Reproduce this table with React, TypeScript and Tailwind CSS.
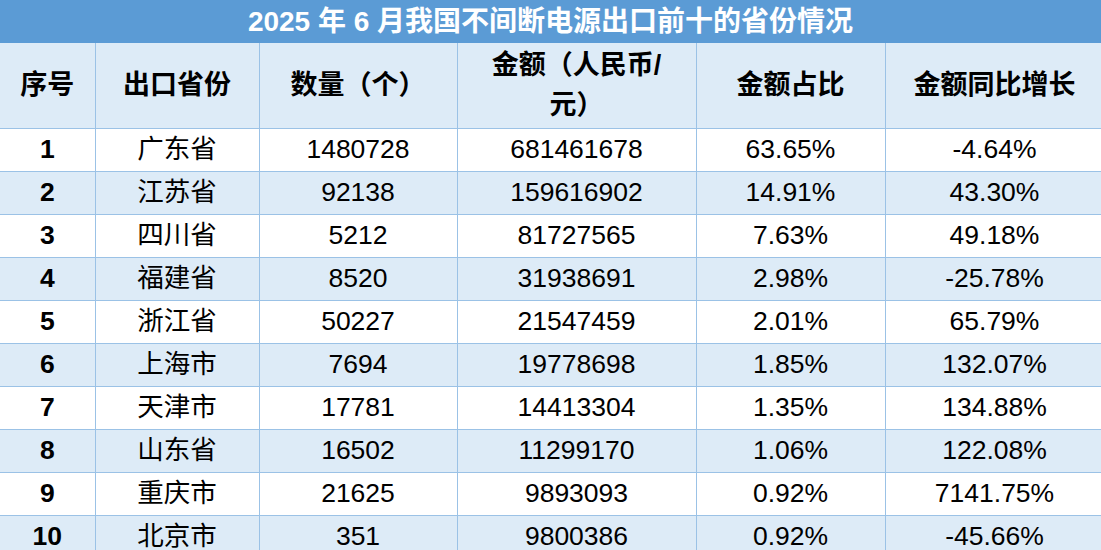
const rows = [
  ['1', '广东省', '1480728', '681461678', '63.65%', '-4.64%'],
  ['2', '江苏省', '92138', '159616902', '14.91%', '43.30%'],
  ['3', '四川省', '5212', '81727565', '7.63%', '49.18%'],
  ['4', '福建省', '8520', '31938691', '2.98%', '-25.78%'],
  ['5', '浙江省', '50227', '21547459', '2.01%', '65.79%'],
  ['6', '上海市', '7694', '19778698', '1.85%', '132.07%'],
  ['7', '天津市', '17781', '14413304', '1.35%', '134.88%'],
  ['8', '山东省', '16502', '11299170', '1.06%', '122.08%'],
  ['9', '重庆市', '21625', '9893093', '0.92%', '7141.75%'],
  ['10', '北京市', '351', '9800386', '0.92%', '-45.66%'],
]

const font = "font-['Liberation_Sans','Noto_Sans_CJK_SC',sans-serif]"

export default function App() {
  return (
    <div className={`w-[1101px] h-[550px] overflow-hidden bg-white ${font}`}>
      <div className="h-[43px] bg-[#5b9bd5] text-white text-[28px] font-bold flex items-center justify-center">
        2025 年 6 月我国不间断电源出口前十的省份情况
      </div>
      <table className="border-collapse table-fixed w-[1104px] text-[26.5px] text-black">
        <colgroup>
          <col className="w-[95px]" />
          <col className="w-[164px]" />
          <col className="w-[198px]" />
          <col className="w-[239px]" />
          <col className="w-[189px]" />
          <col className="w-[219px]" />
        </colgroup>
        <thead>
          <tr className="h-[85px] bg-[#ddebf7] font-bold text-[27px]">
            <th className="border border-t-0 border-l-0 border-[#9bc2e6] p-0">序号</th>
            <th className="border border-t-0 border-[#9bc2e6] p-0">出口省份</th>
            <th className="border border-t-0 border-[#9bc2e6] p-0">数量（个）</th>
            <th className="border border-t-0 border-[#9bc2e6] p-0 leading-[40px]">
              金额（人民币/
              <br />
              元）
            </th>
            <th className="border border-t-0 border-[#9bc2e6] p-0">金额占比</th>
            <th className="border border-t-0 border-[#9bc2e6] p-0">金额同比增长</th>
          </tr>
        </thead>
        <tbody>
          {rows.map((r, i) => (
            <tr key={r[0]} className={`h-[43px] ${i % 2 === 1 ? 'bg-[#ddebf7]' : 'bg-white'}`}>
              {r.map((c, j) => (
                <td
                  key={j}
                  className={`border border-[#9bc2e6] p-0 text-center leading-none ${j === 0 ? 'font-bold border-l-0' : ''}`}
                >
                  {c}
                </td>
              ))}
            </tr>
          ))}
        </tbody>
      </table>
    </div>
  )
}
